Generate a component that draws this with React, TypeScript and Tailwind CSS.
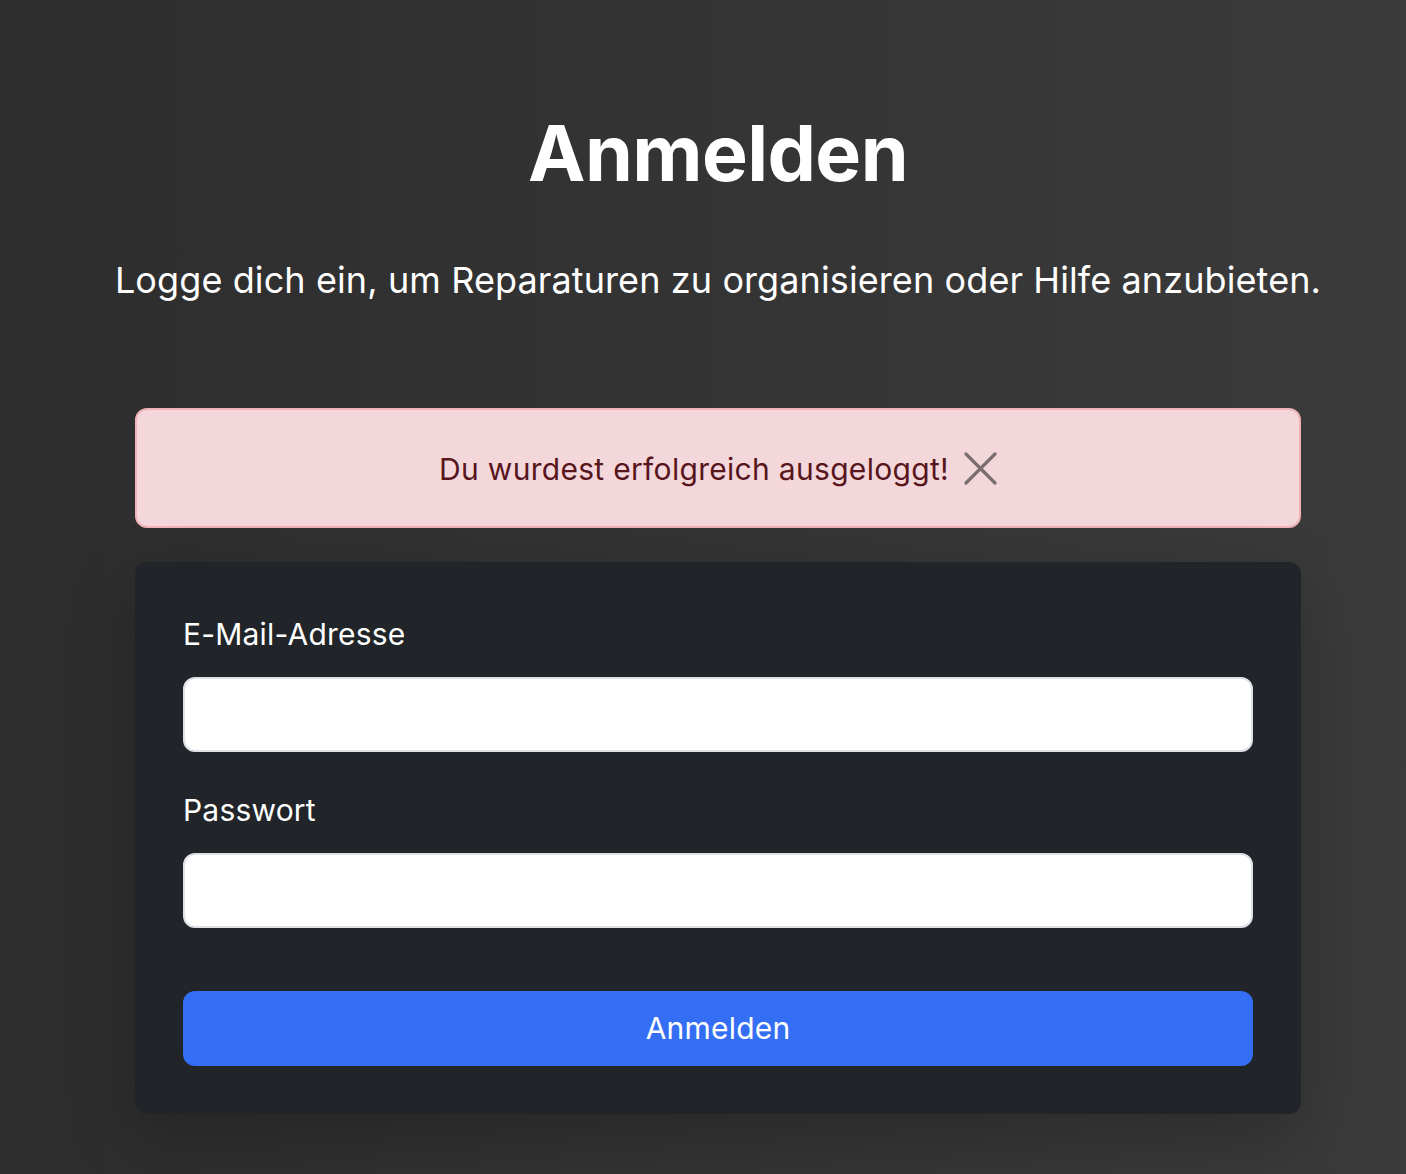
import { useState } from "react";

const font = { fontFamily: "Inter, 'Noto Sans', sans-serif" };

const Field = ({ label, type, className }: { label: string; type: string; className?: string }) => {
  return (
    <div className={className}>
      <label className="block text-[30px] leading-[45px] tracking-[0.2px] text-white mb-5">{label}</label>
      <input
        type={type}
        className="block w-full h-[75px] rounded-xl border-2 border-[#dee2e6] bg-white px-6 text-[30px] text-[#212529] outline-none"
      />
    </div>
  );
};

const App = () => {
  const [showAlert, setShowAlert] = useState(true);

  return (
    <div
      className="min-h-screen w-full bg-linear-to-r from-[#2d2d2d] to-[#3b3b3b] pl-[30px] pb-[60px]"
      style={font}
    >
      <div className="flex flex-col items-center">
        <h1 className="mt-[107px] text-[77px] leading-[92px] font-bold tracking-[-0.6px] text-white">
          Anmelden
        </h1>
        <p className="mt-[54px] text-[36px] leading-[54px] tracking-[0.1px] text-white">
          Logge dich ein, um Reparaturen zu organisieren oder Hilfe anzubieten.
        </p>

        <div className="w-[1166px] mt-[101px]">
          {showAlert && (
            <div className="h-[120px] rounded-xl border-2 border-[#eeb2b8] bg-[#f3d7da] flex items-center justify-center">
              <span className="mt-[3px] text-[30px] leading-[45px] tracking-[0.3px] text-[#58151c]">
                Du wurdest erfolgreich ausgeloggt!
              </span>
              <button
                onClick={() => setShowAlert(false)}
                className="ml-[15px] w-[33px] h-[33px] flex items-center justify-center"
                aria-label="Schließen"
              >
                <svg viewBox="0 0 33 33" className="w-[33px] h-[33px]">
                  <path d="M2 2 L31 31 M31 2 L2 31" stroke="#7a6f70" strokeWidth="3.2" strokeLinecap="round" />
                </svg>
              </button>
            </div>
          )}

          <div className="mt-[34px] rounded-xl bg-[#212529] px-12 pt-[50px] pb-12 shadow-[0_24px_70px_rgba(0,0,0,0.22)]">
            <Field label="E-Mail-Adresse" type="email" />
            <Field label="Passwort" type="password" className="mt-9" />
            <button className="mt-[63px] w-full h-[75px] rounded-xl bg-[#336ef4] text-[30px] tracking-[0.2px] text-white">
              Anmelden
            </button>
          </div>
        </div>
      </div>
    </div>
  );
};

export default App;
